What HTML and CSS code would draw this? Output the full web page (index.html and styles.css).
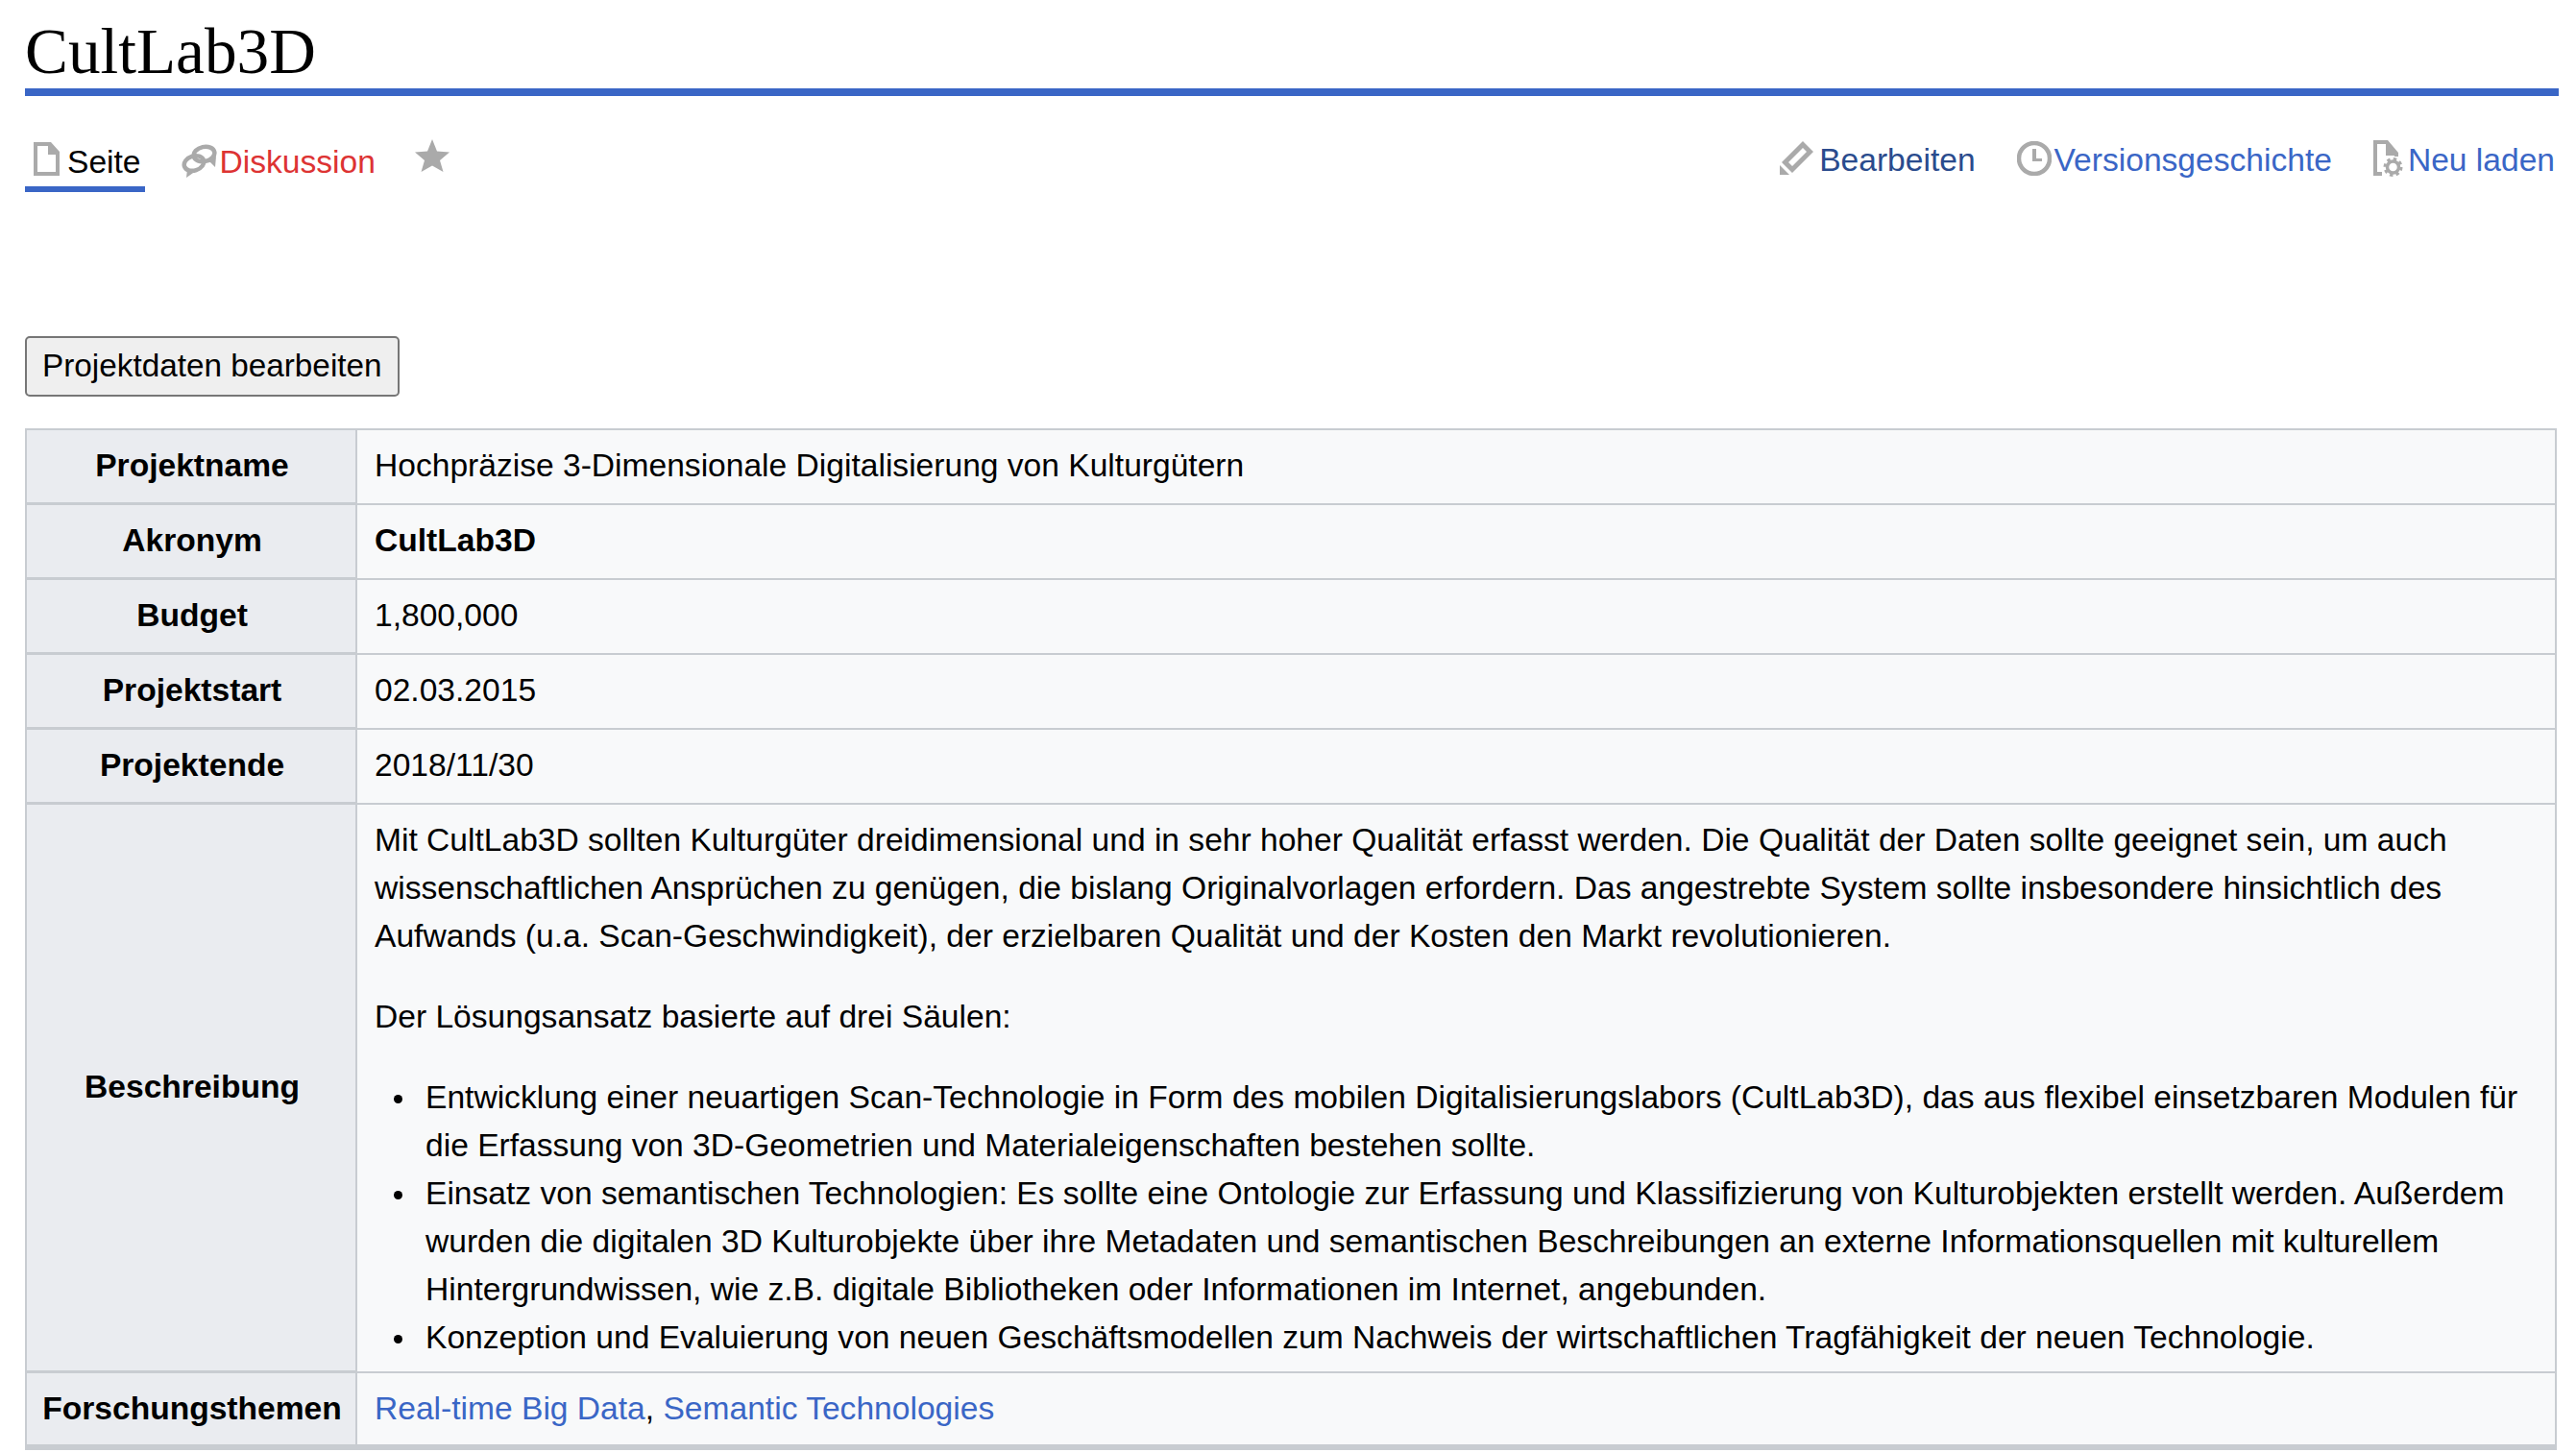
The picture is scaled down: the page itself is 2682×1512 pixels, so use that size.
FILE: index.html
```html
<!DOCTYPE html>
<html>
<head>
<title>CultLab3D</title>
<meta charset="utf-8" />
<link rel="stylesheet" href="styles.css">
</head>
<body>
  <h1 class="title">CultLab3D</h1>
  <div class="tabs">
    <div class="tabs-left">
      <a class="tab tab-active">
        <svg class="icon icon-page" viewBox="0 0 27 35"><path fill-rule="evenodd" d="M0 0H18L27 10V35H0ZM4 4V31H23V13H15V4Z"/></svg>
        Seite
      </a>
      <a class="tab tab-new">
        <svg class="icon icon-talk" viewBox="0 0 37 35">
          <ellipse class="line" cx="23.5" cy="10.5" rx="11" ry="7.500" transform="rotate(-12 23.5 10.5)"/>
          <ellipse class="line" cx="13" cy="20" rx="10.500" ry="7.500" transform="rotate(-18 13 20)"/>
          <path d="M6 26L5 35L15 28ZM28 17L35 24L36 13Z"/>
        </svg>
        Diskussion
      </a>
      <svg class="icon icon-star" viewBox="0 0 36 34"><path d="M18 0L23 12.500L36 13.500L26 22L29.500 34L18 27.500L6.500 34L10 22L0 13.500L13 12.500Z"/></svg>
    </div>
    <div class="tabs-right">
      <a class="tab tab-visited">
        <svg class="icon icon-edit" viewBox="0 0 35 35">
          <path fill-rule="evenodd" d="M24 0L35 11L13 33L2 22ZM24 7L9 22L13 26L28 11Z"/>
          <path d="M0 25L10 35H0Z"/>
        </svg>
        Bearbeiten
      </a>
      <a class="tab">
        <svg class="icon icon-clock" viewBox="0 0 36 36">
          <circle class="line" cx="18" cy="18" r="16"/>
          <path d="M16 8H20V18H26V21H16Z"/>
        </svg>
        Versionsgeschichte
      </a>
      <a class="tab">
        <svg class="icon icon-purge" viewBox="0 0 31 38">
          <path fill-rule="evenodd" d="M0 0H15L26 13V17H22V16H13V4H4V33H9V37H0Z"/>
          <circle class="gear" cx="20.500" cy="28" r="6"/>
          <circle class="teeth" cx="20.500" cy="28" r="8.500"/>
        </svg>
        Neu laden
      </a>
    </div>
  </div>

  <button class="edit-btn">Projektdaten bearbeiten</button>

  <table class="infobox">
    <tr><th>Projektname</th><td>Hochpräzise 3-Dimensionale Digitalisierung von Kulturgütern</td></tr>
    <tr><th>Akronym</th><td><b>CultLab3D</b></td></tr>
    <tr><th>Budget</th><td>1,800,000</td></tr>
    <tr><th>Projektstart</th><td>02.03.2015</td></tr>
    <tr><th>Projektende</th><td>2018/11/30</td></tr>
    <tr class="row-long">
      <th>Beschreibung</th>
      <td>
        <p>Mit CultLab3D sollten Kulturgüter dreidimensional und in sehr hoher Qualität erfasst werden. Die Qualität der Daten sollte geeignet sein, um auch wissenschaftlichen Ansprüchen zu genügen, die bislang Originalvorlagen erfordern. Das angestrebte System sollte insbesondere hinsichtlich des Aufwands (u.a. Scan-Geschwindigkeit), der erzielbaren Qualität und der Kosten den Markt revolutionieren.</p>
        <p>Der Lösungsansatz basierte auf drei Säulen:</p>
        <ul>
          <li>Entwicklung einer neuartigen Scan-Technologie in Form des mobilen Digitalisierungslabors (CultLab3D), das aus flexibel einsetzbaren Modulen für die Erfassung von 3D-Geometrien und Materialeigenschaften bestehen sollte.</li>
          <li>Einsatz von semantischen Technologien: Es sollte eine Ontologie zur Erfassung und Klassifizierung von Kulturobjekten erstellt werden. Außerdem wurden die digitalen 3D Kulturobjekte über ihre Metadaten und semantischen Beschreibungen an externe Informationsquellen mit kulturellem Hintergrundwissen, wie z.B. digitale Bibliotheken oder Informationen im Internet, angebunden.</li>
          <li>Konzeption und Evaluierung von neuen Geschäftsmodellen zum Nachweis der wirtschaftlichen Tragfähigkeit der neuen Technologie.</li>
        </ul>
      </td>
    </tr>
    <tr class="row-last"><th>Forschungsthemen</th><td><a class="link">Real-time Big Data</a>, <a class="link">Semantic Technologies</a></td></tr>
  </table>
</body>
</html>
```

FILE: styles.css
```css
body {
  margin: 0;
  padding: 0 20px 0 26px;
  background: #fff;
  color: #000;
  font-family: "Liberation Sans", Arial, sans-serif;
  font-size: 33.6px;
  line-height: 50px;
  overflow: hidden;
}

.title {
  margin: 0 -2px 0 0;
  height: 92px;
  border-bottom: 8px solid #3a66c6;
  font-family: "Liberation Serif", "Times New Roman", serif;
  font-size: 67.300px;
  font-weight: normal;
  line-height: 108px;
  white-space: nowrap;
}

/* tab row */
.tabs {
  display: flex;
  justify-content: space-between;
  height: 100px;
  margin-right: -2px;
}

.tabs-left,
.tabs-right {
  display: flex;
}

.tabs-left {
  gap: 38px;
}

.tabs-right {
  gap: 43px;
  padding: 42px 4px 0 0;
}

.tab {
  display: flex;
  height: 50px;
  color: #3a66c6;
  white-space: nowrap;
}

.tabs-left .tab {
  height: 100px;
  padding-top: 44px;
  box-sizing: border-box;
}

.tab-active {
  border-bottom: 6px solid #3a66c6;
  padding: 0 4px 0 9px;
  color: #000;
}

.tab-new {
  color: #dd3333;
}

.tab-visited {
  color: #2a4b8d;
}

.icon {
  flex: none;
  fill: #aaa;
}

.icon .line {
  fill: none;
  stroke: #aaa;
  stroke-width: 4.500;
}

.icon .gear {
  fill: none;
  stroke: #aaa;
  stroke-width: 3.500;
}

.icon .teeth {
  fill: none;
  stroke: #aaa;
  stroke-width: 3;
  stroke-dasharray: 3.400 3.280;
}

.icon-page { width: 27px; height: 35px; margin: 4px 8px 0 0; }
.icon-talk { width: 37px; height: 35px; margin: 6px 3px 0 0; }
.icon-star { width: 36px; height: 34px; margin: 45px 0 0 3px; }
.icon-edit { width: 35px; height: 35px; margin: 5px 6px 0 0; }
.icon-clock { width: 36px; height: 36px; margin: 5px 3px 0 0; }
.icon-purge { width: 31px; height: 38px; margin: 4px 5px 0 0; }

.edit-btn {
  display: block;
  box-sizing: border-box;
  height: 63px;
  margin: 150px 0 33px;
  padding: 0 16px 2px;
  background: #efefef;
  border: 2px solid #767676;
  border-radius: 5px;
  color: #000;
  font: inherit;
  font-size: 33.300px;
}

/* project table */
.infobox {
  width: 100%;
  border-spacing: 0;
  border-top: 2px solid #c8ccd1;
  border-left: 2px solid #c8ccd1;
}

.infobox th,
.infobox td {
  border-bottom: 2px solid #c8ccd1;
  padding: 12px 18px 14px;
}

.infobox th {
  width: 344px;
  box-sizing: border-box;
  padding: 11px 0 13px 2px;
  border-right: 2px solid #c8ccd1;
  border-bottom-width: 3px;
  background: #eaecf0;
  text-align: center;
}

.infobox td {
  border-right: 2px solid #c8ccd1;
  background: #f8f9fa;
  text-align: left;
}

.infobox p {
  margin: 0 0 34px;
}

.infobox ul {
  margin: 0;
  padding-left: 53px;
  list-style: none;
}

.infobox li {
  position: relative;
}

.infobox li::before {
  content: "";
  position: absolute;
  top: 22px;
  left: -33px;
  width: 9px;
  height: 9px;
  border-radius: 50%;
  background: #000;
}

.row-long td {
  padding-top: 12px;
  padding-bottom: 10px;
}

.row-last th,
.row-last td {
  padding-top: 12px;
  padding-bottom: 12px;
  border-bottom-width: 6px;
}

.link {
  color: #3a66c6;
}
```
